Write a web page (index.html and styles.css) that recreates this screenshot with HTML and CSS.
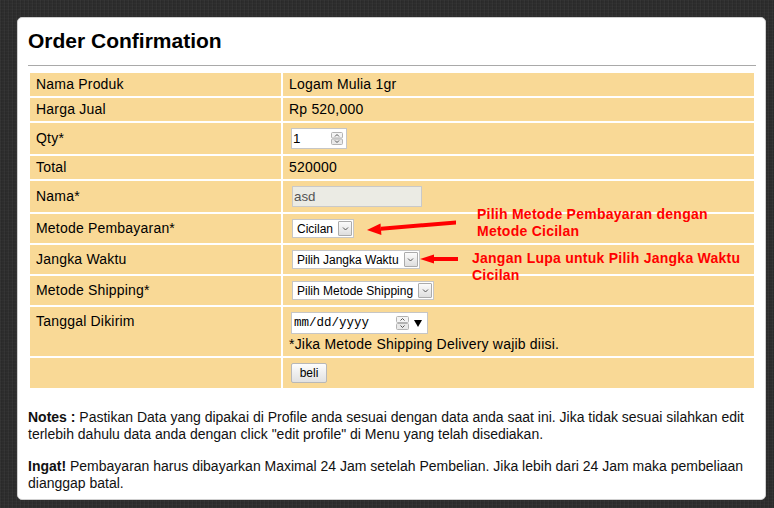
FILE: index.html
```
<!DOCTYPE html>
<html lang="id">
<head>
<meta charset="utf-8">
<title>Order Confirmation</title>
<link rel="stylesheet" href="styles.css">
</head>
<body>
<div class="panel">
  <h1 class="title">Order Confirmation</h1>
  <div class="form-wrap">
    <table class="order">
      <tr><td class="lbl">Nama Produk</td><td class="val">Logam Mulia 1gr</td></tr>
      <tr><td class="lbl">Harga Jual</td><td class="val">Rp 520,000</td></tr>
      <tr><td class="lbl">Qty*</td><td class="val"><span class="field qty"><input class="field-input" type="text" value="1"><svg class="spin" width="12" height="13" viewBox="0 0 12 13"><rect x="0.5" y="0.5" width="11" height="5.5" rx="1" fill="#f4f4f4" stroke="#b3b3b3"/><rect x="0.5" y="7" width="11" height="5.5" rx="1" fill="#e9e9e9" stroke="#b3b3b3"/><path d="M4 4.5 L6 2.5 L8 4.5" fill="none" stroke="#555"/><path d="M4 8.5 L6 10.5 L8 8.5" fill="none" stroke="#555"/></svg></span></td></tr>
      <tr><td class="lbl">Total</td><td class="val">520000</td></tr>
      <tr><td class="lbl">Nama*</td><td class="val"><input class="name-input" type="text" value="asd" disabled></td></tr>
      <tr><td class="lbl">Metode Pembayaran*</td><td class="val"><span class="select"><span class="select-text">Cicilan</span><span class="select-btn"><svg width="7" height="4" viewBox="0 0 7 4"><path d="M1 0.5 L3.5 3 L6 0.5" fill="none" stroke="#555"/></svg></span></span></td></tr>
      <tr><td class="lbl">Jangka Waktu</td><td class="val"><span class="select"><span class="select-text">Pilih Jangka Waktu</span><span class="select-btn"><svg width="7" height="4" viewBox="0 0 7 4"><path d="M1 0.5 L3.5 3 L6 0.5" fill="none" stroke="#555"/></svg></span></span></td></tr>
      <tr><td class="lbl">Metode Shipping*</td><td class="val"><span class="select"><span class="select-text">Pilih Metode Shipping</span><span class="select-btn"><svg width="7" height="4" viewBox="0 0 7 4"><path d="M1 0.5 L3.5 3 L6 0.5" fill="none" stroke="#555"/></svg></span></span></td></tr>
      <tr><td class="lbl">Tanggal Dikirim</td><td class="val"><span class="field date"><span class="date-text">mm/dd/yyyy</span><svg class="date-spin" width="13" height="14" viewBox="0 0 13 14"><rect x="0.5" y="0.5" width="12" height="6" rx="1" fill="#f4f4f4" stroke="#b3b3b3"/><rect x="0.5" y="7.5" width="12" height="6" rx="1" fill="#e9e9e9" stroke="#b3b3b3"/><path d="M4.5 4.5 L6.5 2.5 L8.5 4.5" fill="none" stroke="#555"/><path d="M4.5 9.5 L6.5 11.5 L8.5 9.5" fill="none" stroke="#555"/></svg><svg class="date-drop" width="8" height="7" viewBox="0 0 8 7"><polygon points="0,0 8,0 4,7" fill="#000"/></svg></span><div class="ship-note">*Jika Metode Shipping Delivery wajib diisi.</div></td></tr>
      <tr><td class="lbl"></td><td class="val"><button class="btn" type="button">beli</button></td></tr>
    </table>
    <svg class="arrows" width="728" height="330" viewBox="0 0 728 330">
      <polygon points="428,149.5 428,153.5 353,159.8 353,155.8" fill="#f00"/>
      <polygon points="339,159 353.4,164 352.5,152.5" fill="#f00"/>
      <rect x="404" y="186" width="26" height="4" fill="#f00"/>
      <polygon points="392,188 406,183.5 406,192.5" fill="#f00"/>
    </svg>
    <div class="note note-pay">Pilih Metode Pembayaran dengan<br>Metode Cicilan</div>
    <div class="note note-term">Jangan Lupa untuk Pilih Jangka Waktu<br>Cicilan</div>
  </div>
  <p class="notes"><strong class="lead">Notes :</strong> Pastikan Data yang dipakai di Profile anda sesuai dengan data anda saat ini. Jika tidak sesuai silahkan edit terlebih dahulu data anda dengan click "edit profile" di Menu yang telah disediakan.</p>
  <p class="notes notes-2"><strong class="lead">Ingat!</strong> Pembayaran harus dibayarkan Maximal 24 Jam setelah Pembelian. Jika lebih dari 24 Jam maka pembeliaan dianggap batal.</p>
</div>
</body>
</html>
```
FILE: styles.css
```
html, body {
  margin: 0;
}
body {
  padding: 17px 0 0 17px;
  min-height: 508px;
  box-sizing: border-box;
  background-color: #2c2c2c;
  background-image:
    repeating-linear-gradient(90deg, rgba(255,255,255,0.03) 0 1px, rgba(0,0,0,0.06) 1px 2px, transparent 2px 4px),
    repeating-linear-gradient(0deg, rgba(255,255,255,0.02) 0 1px, transparent 1px 3px);
  font-family: "Liberation Sans", Arial, sans-serif;
  color: #000;
}
.panel {
  width: 749px;
  box-sizing: border-box;
  background: #fff;
  border: 1px solid #cfcfcf;
  border-radius: 5px;
  padding: 11px 9px 7px 10px;
}
.title {
  margin: 0;
  font-size: 21px;
  line-height: 24px;
  font-weight: bold;
  padding-bottom: 12px;
  border-bottom: 1px solid #a9a9a9;
}
.form-wrap {
  position: relative;
  margin-top: 5px;
}
.order {
  width: 728px;
  border-collapse: separate;
  border-spacing: 2px;
  font-size: 14px;
  line-height: 17px;
  letter-spacing: 0.2px;
}
.order td {
  background: #f9d996;
  padding: 3px 6px;
  vertical-align: baseline;
}
.order td.lbl {
  width: 239px;
}
.field {
  display: inline-flex;
  align-items: center;
  vertical-align: baseline;
  box-sizing: border-box;
  border: 1px solid #c6c6c6;
  background: #fff;
  margin: 2px 0 2px 2px;
  letter-spacing: 0;
}
.qty {
  width: 56px;
  height: 21px;
  padding: 0 3px 0 1px;
}
.field-input {
  flex: 1;
  min-width: 0;
  width: 30px;
  border: 0;
  padding: 0;
  margin: 0;
  font-family: "Liberation Sans", Arial, sans-serif;
  font-size: 13.33px;
  background: transparent;
  color: #000;
  outline: none;
}
.name-input {
  box-sizing: border-box;
  width: 130px;
  height: 21px;
  margin: 2px 0 2px 3px;
  padding: 0 1px;
  border: 1px solid #c9c9c9;
  background: #ebebe4;
  color: #545454;
  font-family: "Liberation Sans", Arial, sans-serif;
  font-size: 13.33px;
  vertical-align: baseline;
}
.select {
  display: inline-flex;
  align-items: center;
  vertical-align: baseline;
  box-sizing: border-box;
  height: 19px;
  border: 1px solid #c6c6c6;
  background: #fff;
  margin: 2px 0 2px 3px;
  padding: 0 1px 0 4px;
  font-size: 12px;
  line-height: 14px;
  letter-spacing: 0;
}
.select-text {
  padding-right: 5px;
}
.select-btn {
  display: flex;
  align-items: center;
  justify-content: center;
  box-sizing: border-box;
  width: 14px;
  height: 15px;
  border: 1px solid #ababab;
  border-radius: 1px;
  background: linear-gradient(#fbfbfb, #dedede);
}
.date {
  width: 137px;
  height: 22px;
  padding: 0 5px 0 2px;
}
.date-text {
  flex: 1;
  font-family: "Liberation Mono", "Courier New", monospace;
  font-size: 12.5px;
  color: #000;
}
.date-spin {
  margin-right: 5px;
}
.ship-note {
  line-height: 17px;
}
.btn {
  box-sizing: border-box;
  width: 36px;
  height: 20px;
  margin: 2px 0 2px 2px;
  padding: 0;
  border: 1px solid #b8b8b8;
  border-radius: 2px;
  background: linear-gradient(#fdfdfd, #e1e1e1);
  font-family: "Liberation Sans", Arial, sans-serif;
  font-size: 12px;
  letter-spacing: 0;
  color: #000;
  vertical-align: baseline;
}
.arrows {
  position: absolute;
  left: 0;
  top: 0;
  pointer-events: none;
}
.note {
  position: absolute;
  color: #f00;
  font-weight: bold;
  font-size: 14px;
  line-height: 17px;
  letter-spacing: 0.25px;
  white-space: nowrap;
}
.note-pay {
  left: 449px;
  top: 135px;
}
.note-term {
  left: 444px;
  top: 179px;
}
.notes {
  margin: 19px 0 0;
  font-size: 14px;
  line-height: 17px;
  color: #111;
}
.notes-2 {
  margin-top: 15px;
}
.lead {
  font-weight: bold;
}
```
